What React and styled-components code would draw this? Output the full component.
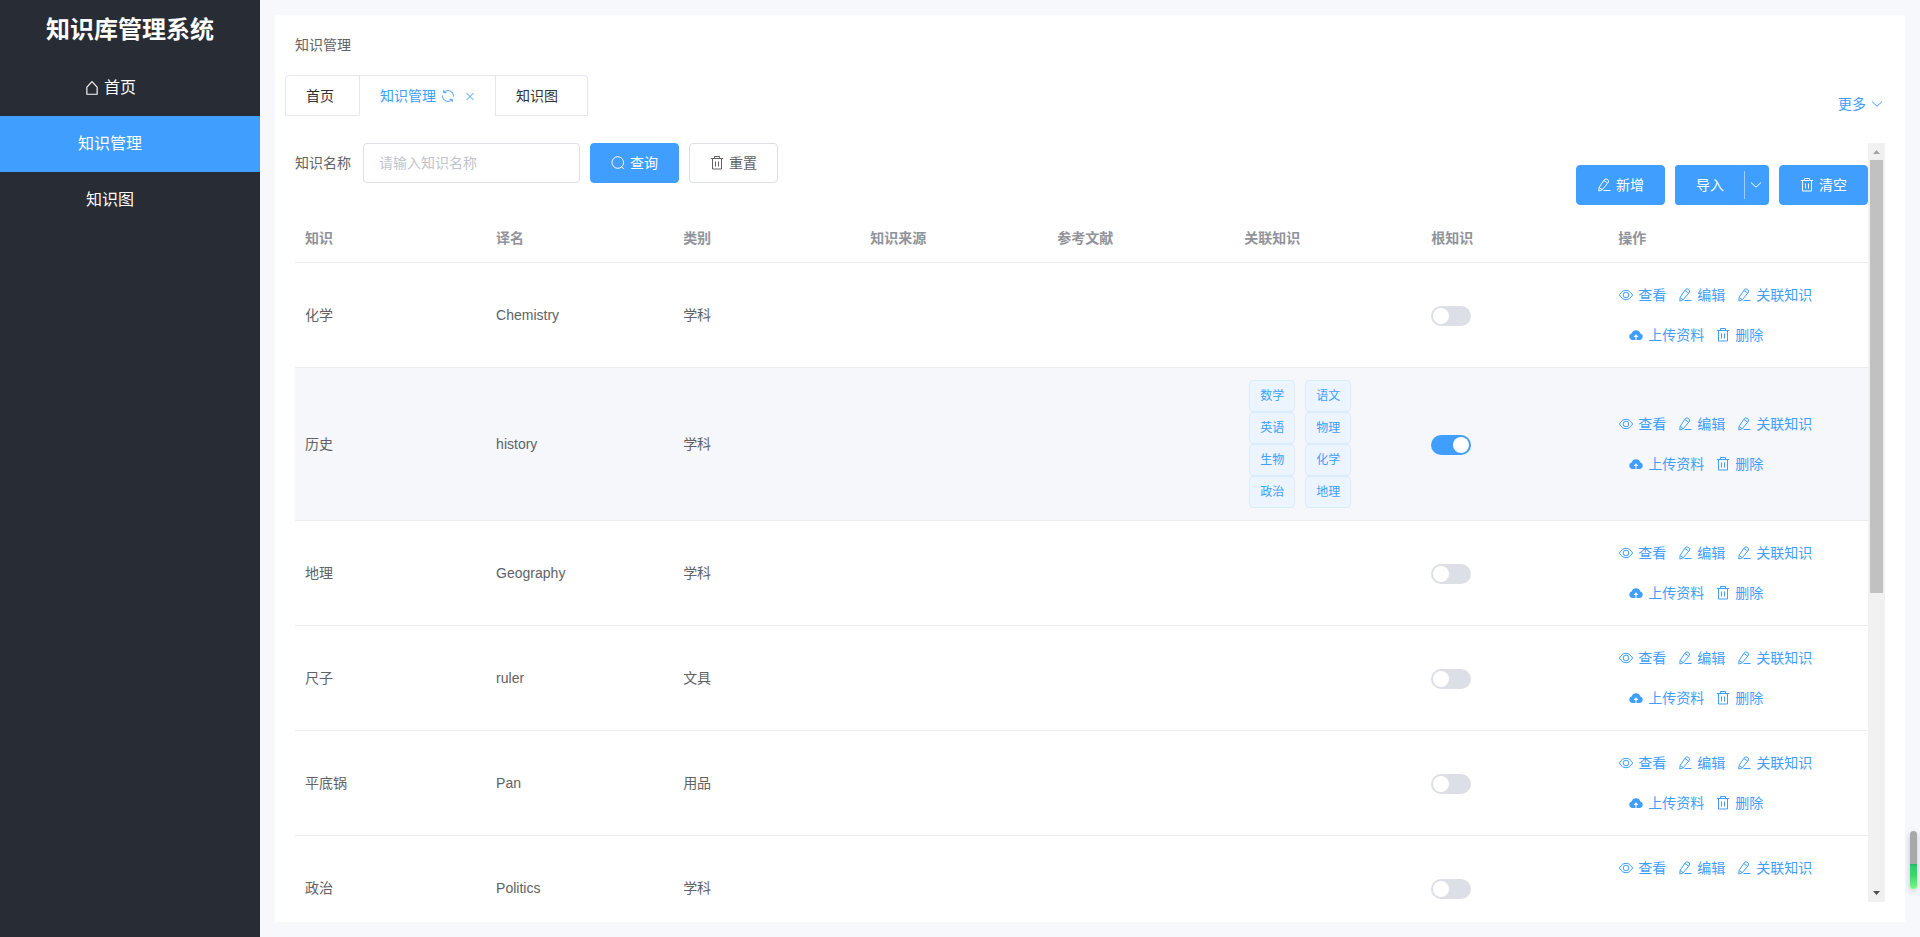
import React from "react";
import styled, { createGlobalStyle, css } from "styled-components";

const GlobalStyle = createGlobalStyle`
  *, *::before, *::after { box-sizing: border-box; }
  body {
    margin: 0;
    background: #f6f8fb;
    color: #606266;
    font: 14px/20px "Liberation Sans", "Noto Sans CJK SC", sans-serif;
  }
  button, input { font: inherit; }
`;

const Svg = styled.svg`
  width: ${(p) => p.$size || 14}px;
  height: ${(p) => p.$size || 14}px;
  flex: none;
  fill: none;
  stroke: currentColor;
  stroke-width: 1;
  stroke-linejoin: round;
`;

const shapes = {
  home: <path d="M2.500 6.200 7 1.500l4.500 4.700V12.500H2.500Z" />,
  refresh: (
    <path d="M2.800 3.500C5 1.200 8.500 1 10.700 3C12 4.200 12.600 5.800 12.500 7.500M2.800 1V3.700H5.500M11.200 10.500C9 12.800 5.500 13 3.300 11C2 9.800 1.400 8.200 1.500 6.500M11.200 13V10.300H8.500" />
  ),
  close: <path d="m3.500 4 7 7m0-7-7 7" />,
  search: (
    <>
      <circle cx="6.800" cy="6.500" r="5.800" />
      <path d="m10.500 10.700 2.400 2.500" />
    </>
  ),
  trash: <path d="M.8 2.500h12.400M4.500 2.500v-2h5v2M2.500 2.500v10.500h9v-10.500M5.500 5.500v5M8.500 5.500v5" />,
  edit: <path d="M7.300 1.700 9 .7l2.500 1.600-.1 2L5.200 11.800 1.800 13l.3-3.600ZM7 2.600l3.700 2.500M2.300 9.500l2.900 2.200M6.500 12.500h7" />,
  eye: (
    <>
      <path d="M.4 7C2 4 4.300 2.300 7 2.300S12 4 13.600 7C12 10 9.700 11.700 7 11.700S2 10 .4 7Z" />
      <circle cx="7" cy="7" r="2.800" />
    </>
  ),
  upload: (
    <path
      d="M3.400 11.900a3.200 3.200 0 0 1-.7-6.300 4.400 4.400 0 0 1 8.600 0 3.200 3.200 0 0 1-.7 6.300H7.500V9h1.900L7 6.200 4.600 9h1.900v2.900Z"
      fill="currentColor"
      stroke="none"
    />
  ),
  down: <path d="m2 4.500 5 4.700 5-4.700" />,
};

const Icon = ({ name, size }) => (
  <Svg viewBox="0 0 14 14" $size={size} aria-hidden="true">
    {shapes[name]}
  </Svg>
);

const Layout = styled.div`
  display: flex;
  height: 100vh;
`;

const Sidebar = styled.aside`
  flex: 0 0 260px;
  background: #282c34;
  color: #fff;
`;

const Brand = styled.h1`
  margin: 0;
  height: 60px;
  font-size: 24px;
  line-height: 60px;
  text-align: center;
`;

const MenuLink = styled.a`
  display: flex;
  align-items: center;
  justify-content: center;
  gap: 4px;
  height: 56px;
  padding-right: 40px;
  font-size: 16px;
  color: #fff;
  text-decoration: none;
  background: ${(p) => (p.$active ? "#409eff" : "transparent")};
`;

const Main = styled.main`
  flex: 1;
  min-width: 0;
  padding: 15px;
`;

const Card = styled.section`
  display: flex;
  flex-direction: column;
  height: 100%;
  padding: 20px 20px 20px 10px;
  background: #fff;
`;

const Crumb = styled.div`
  padding: 0 10px;
`;

const TabBar = styled.div`
  display: flex;
  justify-content: space-between;
  align-items: flex-start;
  margin-top: 20px;
`;

const Tabs = styled.nav`
  display: flex;
  height: 41px;
  border: solid #e4e7ed;
  border-width: 1px 1px 0;
  border-radius: 4px 4px 0 0;
`;

const Tab = styled.a`
  display: flex;
  align-items: center;
  gap: 5px;
  padding: 0 ${(p) => p.$end}px 0 20px;
  color: ${(p) => (p.$active ? "#409eff" : "#303133")};
  text-decoration: none;
  border-bottom: 1px solid ${(p) => (p.$active ? "#fff" : "#e4e7ed")};
  & + & { border-left: 1px solid #e4e7ed; }
`;

const TabClose = styled.span`
  display: flex;
  margin-left: 3px;
`;

const More = styled.button`
  display: flex;
  align-items: center;
  gap: 4px;
  margin-top: 19px;
  padding: 0 1px 0 0;
  border: 0;
  background: none;
  color: #409eff;
`;

const Body = styled.div`
  display: flex;
  flex: 1;
  min-height: 0;
  margin-top: 27px;
  padding-left: 10px;
`;

const Scroller = styled.div`
  flex: 1;
  min-width: 0;
  margin-bottom: 1px;
  overflow-y: auto;
  scrollbar-width: none;
`;

const Scrollbar = styled.div`
  display: flex;
  flex-direction: column;
  width: 17px;
  background: #f1f1f1;
`;

const Arrow = styled.svg`
  width: 17px;
  height: 17px;
  fill: ${(p) => (p.$dim ? "#a3a3a3" : "#505050")};
`;

const Track = styled.div`
  flex: 1;
  padding: 0 2px;
`;

const Thumb = styled.div`
  height: 59.7%;
  background: #c1c1c1;
`;

const TopRow = styled.div`
  display: flex;
  justify-content: space-between;
  align-items: flex-start;
`;

const SearchForm = styled.form`
  display: flex;
  align-items: center;
  gap: 10px;
`;

const Field = styled.label`
  display: flex;
  align-items: center;
  gap: 12px;
`;

const TextInput = styled.input`
  width: 217px;
  height: 40px;
  padding: 0 15px;
  border: 1px solid #dcdfe6;
  border-radius: 4px;
  color: #606266;
  outline: none;
  &::placeholder { color: #c0c4cc; }
`;

const primary = css`
  background: #409eff;
  border-color: #409eff;
  color: #fff;
`;

const Button = styled.button`
  display: flex;
  align-items: center;
  gap: 5px;
  height: 40px;
  padding: 0 20px;
  border: 1px solid #dcdfe6;
  border-radius: 4px;
  background: #fff;
  color: #606266;
  ${(p) => p.$primary && primary}
`;

const Toolbar = styled.div`
  display: flex;
  gap: 10px;
  padding: 22px 0 10px;
`;

const Split = styled.div`
  display: flex;
  align-items: center;
  border-radius: 4px;
  background: #409eff;
`;

const SplitMain = styled(Button)`
  border-right: 0;
`;

const SplitToggle = styled.button`
  display: flex;
  align-items: center;
  height: 28px;
  padding: 0 6px 0 4px;
  border: 0;
  border-left: 1px solid #9fceff;
  background: none;
  color: #fff;
`;

const Table = styled.table`
  width: 100%;
  table-layout: fixed;
  border-collapse: separate;
  border-spacing: 0;
`;

const Col = styled.col`
  width: ${(p) => p.$w};
`;

const Th = styled.th`
  height: 48px;
  padding: 0 10px 2px;
  border-bottom: 1px solid #ebeef5;
  color: #909399;
  font-weight: bold;
  text-align: left;
`;

const Td = styled.td`
  padding: 12px 10px;
  border-bottom: 1px solid #ebeef5;
  background: ${(p) => (p.$hover ? "#f5f7fa" : "#fff")};
`;

const Tags = styled.div`
  display: grid;
  grid-template-columns: 46px 46px;
  column-gap: 10px;
  padding-left: 5px;
`;

const Tag = styled.span`
  height: 32px;
  border: 1px solid #d9ecff;
  border-radius: 4px;
  background: #ecf5ff;
  color: #409eff;
  font-size: 12px;
  line-height: 30px;
  text-align: center;
`;

const Switch = styled.input`
  appearance: none;
  display: block;
  width: 40px;
  height: 20px;
  margin: 2px 0 0;
  padding: 2px;
  border-radius: 10px;
  background: #dcdfe6;
  &::before {
    content: "";
    display: block;
    width: 16px;
    height: 16px;
    border-radius: 50%;
    background: #fff;
  }
  &:checked { background: #409eff; }
  &:checked::before { margin-left: auto; }
`;

const Actions = styled.div`
  display: flex;
  gap: 12px;
  height: 40px;
  padding-left: ${(p) => (p.$indent ? 11 : 1)}px;
`;

const TextButton = styled.button`
  display: flex;
  align-items: center;
  gap: 5px;
  padding: 0;
  border: 0;
  background: none;
  color: #409eff;
  white-space: nowrap;
`;

const Meter = styled.div`
  position: fixed;
  right: 3px;
  bottom: 48px;
  width: 7px;
  height: 58px;
  border-radius: 4px;
  background: linear-gradient(#a8a8a8 33px, #22b866 33px, #2fce6e 36px, #3bd670 44px, #7df58a);
  box-shadow: 0 2px 6px rgba(0, 0, 0, 0.2);
`;

const headings = ["知识", "译名", "类别", "知识来源", "参考文献", "关联知识", "根知识", "操作"];

const rows = [
  { name: "化学", alias: "Chemistry", kind: "学科" },
  {
    name: "历史",
    alias: "history",
    kind: "学科",
    root: true,
    tags: ["数学", "语文", "英语", "物理", "生物", "化学", "政治", "地理"],
  },
  { name: "地理", alias: "Geography", kind: "学科" },
  { name: "尺子", alias: "ruler", kind: "文具" },
  { name: "平底锅", alias: "Pan", kind: "用品" },
  { name: "政治", alias: "Politics", kind: "学科" },
];

const Action = ({ icon, children }) => (
  <TextButton type="button">
    <Icon name={icon} />
    {children}
  </TextButton>
);

const KnowledgeRow = ({ row }) => {
  const hover = Boolean(row.root);
  return (
    <tr>
      <Td $hover={hover}>{row.name}</Td>
      <Td $hover={hover}>{row.alias}</Td>
      <Td $hover={hover}>{row.kind}</Td>
      <Td $hover={hover} />
      <Td $hover={hover} />
      <Td $hover={hover}>
        {row.tags && (
          <Tags>
            {row.tags.map((t) => (
              <Tag key={t}>{t}</Tag>
            ))}
          </Tags>
        )}
      </Td>
      <Td $hover={hover}>
        <Switch type="checkbox" role="switch" aria-label={`${row.name} 根知识`} defaultChecked={hover} />
      </Td>
      <Td $hover={hover}>
        <Actions>
          <Action icon="eye">查看</Action>
          <Action icon="edit">编辑</Action>
          <Action icon="edit">关联知识</Action>
        </Actions>
        <Actions $indent>
          <Action icon="upload">上传资料</Action>
          <Action icon="trash">删除</Action>
        </Actions>
      </Td>
    </tr>
  );
};

export default function App() {
  return (
    <Layout>
      <GlobalStyle />
      <Sidebar>
        <Brand>知识库管理系统</Brand>
        <nav>
          <MenuLink href="#home">
            <Icon name="home" size={16} />
            首页
          </MenuLink>
          <MenuLink href="#knowledge" $active>知识管理</MenuLink>
          <MenuLink href="#graph">知识图</MenuLink>
        </nav>
      </Sidebar>
      <Main>
        <Card>
          <Crumb>知识管理</Crumb>
          <TabBar>
            <Tabs>
              <Tab href="#home" $end={25}>首页</Tab>
              <Tab href="#knowledge" $end={18} $active>
                知识管理
                <Icon name="refresh" />
                <TabClose><Icon name="close" /></TabClose>
              </Tab>
              <Tab href="#graph" $end={29}>知识图</Tab>
            </Tabs>
            <More type="button">
              更多
              <Icon name="down" />
            </More>
          </TabBar>
          <Body>
            <Scroller>
              <TopRow>
                <SearchForm>
                  <Field>
                    知识名称
                    <TextInput placeholder="请输入知识名称" />
                  </Field>
                  <Button type="button" $primary><Icon name="search" />查询</Button>
                  <Button type="button"><Icon name="trash" />重置</Button>
                </SearchForm>
                <Toolbar>
                  <Button type="button" $primary><Icon name="edit" />新增</Button>
                  <Split>
                    <SplitMain type="button" $primary>导入</SplitMain>
                    <SplitToggle type="button" aria-label="导入选项"><Icon name="down" /></SplitToggle>
                  </Split>
                  <Button type="button" $primary><Icon name="trash" />清空</Button>
                </Toolbar>
              </TopRow>
              <Table>
                <colgroup>
                  {headings.map((h, i) => (
                    <Col key={h} $w={i === 0 ? "12.15%" : i === 7 ? "auto" : "11.89%"} />
                  ))}
                </colgroup>
                <thead>
                  <tr>
                    {headings.map((h) => (
                      <Th key={h} scope="col">{h}</Th>
                    ))}
                  </tr>
                </thead>
                <tbody>
                  {rows.map((row) => (
                    <KnowledgeRow key={row.name} row={row} />
                  ))}
                </tbody>
              </Table>
            </Scroller>
            <Scrollbar aria-hidden="true">
              <Arrow viewBox="0 0 17 17" $dim><path d="M5 11h7L8.500 7Z" /></Arrow>
              <Track><Thumb /></Track>
              <Arrow viewBox="0 0 17 17"><path d="M5 6h7L8.500 10Z" /></Arrow>
            </Scrollbar>
          </Body>
        </Card>
      </Main>
      <Meter />
    </Layout>
  );
}
